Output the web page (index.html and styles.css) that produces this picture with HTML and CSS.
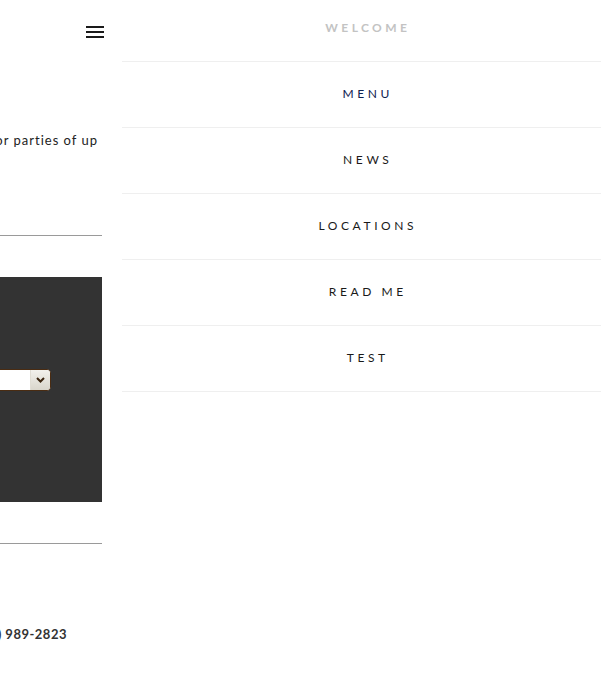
FILE: index.html
```html
<!DOCTYPE html>
<html lang="en">
<head>
<meta charset="utf-8">
<title>Menu</title>
<link rel="stylesheet" href="styles.css">
</head>
<body>
<div class="shell">
  <div class="page-clip">
    <div class="page">
      <header class="page-header">
        <button class="burger" aria-label="Menu">
          <span></span><span></span><span></span>
        </button>
      </header>
      <p class="intro">Reservations are accepted for parties of up</p>
      <hr class="rule rule-top">
      <section class="dark-box">
        <div class="select">
          <span class="select-field">Select a location</span>
          <span class="select-btn">
            <svg width="9" height="6" viewBox="0 0 9 6"><path d="M1 1 L4.5 4.5 L8 1" fill="none" stroke="#3a2510" stroke-width="2"/></svg>
          </span>
        </div>
      </section>
      <hr class="rule rule-bottom">
      <p class="phone">Call us (555) 989-2823</p>
    </div>
  </div>
  <nav class="side-nav">
    <ul class="nav-list">
      <li class="nav-item welcome">WELCOME</li>
      <li class="nav-item active">MENU</li>
      <li class="nav-item">NEWS</li>
      <li class="nav-item">LOCATIONS</li>
      <li class="nav-item">READ ME</li>
      <li class="nav-item">TEST</li>
    </ul>
  </nav>
</div>
</body>
</html>
```

FILE: styles.css
```css
html, body {
  margin: 0;
  padding: 0;
  background: #fff;
}
body {
  font-family: Lato, "Noto Sans", "Liberation Sans", sans-serif;
  color: #222;
}
.shell {
  display: flex;
  width: 601px;
  height: 685px;
  overflow: hidden;
}
.page-clip {
  width: 122px;
  flex: 0 0 122px;
  display: flex;
  justify-content: flex-end;
  overflow: hidden;
  padding-right: 20px;
  box-sizing: border-box;
}
.page {
  flex: 0 0 420px;
  width: 420px;
  display: flex;
  flex-direction: column;
}
.page-header {
  height: 61px;
  display: flex;
  justify-content: flex-end;
  align-items: flex-start;
}
.burger {
  margin: 26px -2px 0 0;
  padding: 0;
  border: 0;
  background: none;
  width: 18px;
  display: flex;
  flex-direction: column;
  gap: 3px;
}
.burger span {
  display: block;
  width: 18px;
  height: 2px;
  background: #1a1a1a;
}
.intro {
  margin: 71px 0 0;
  font-size: 13px;
  line-height: 16px;
  letter-spacing: 1px;
  white-space: nowrap;
  text-align: right;
  padding-right: 4px;
  color: #222;
}
.rule {
  border: 0;
  height: 1px;
  background: #9a9a9a;
  margin: 0;
}
.rule-top {
  margin-top: 87px;
}
.dark-box {
  margin-top: 41px;
  height: 225px;
  background: #333;
  display: flex;
  justify-content: flex-end;
  align-items: flex-start;
}
.select {
  margin-top: 92px;
  margin-right: 51px;
  width: 220px;
  height: 22px;
  box-sizing: border-box;
  border: 1px solid #4a2c12;
  border-radius: 4px;
  background: #fff;
  display: flex;
  overflow: hidden;
}
.select-field {
  flex: 1;
  font-size: 12px;
  line-height: 20px;
  padding-left: 6px;
  color: #333;
}
.select-btn {
  width: 19px;
  background: linear-gradient(#f2f1ec, #d9d6cc);
  border-left: 1px solid #e0ddd4;
  display: flex;
  align-items: center;
  justify-content: center;
}
.rule-bottom {
  margin-top: 41px;
}
.phone {
  margin: 82px 0 0;
  font-size: 13px;
  font-weight: 700;
  line-height: 16px;
  letter-spacing: 0.5px;
  white-space: nowrap;
  text-align: right;
  padding-right: 35px;
  color: #333;
}
.side-nav {
  flex: 1;
  overflow: hidden;
}
.nav-list {
  list-style: none;
  margin: 0;
  padding: 0;
  width: 488px;
}
.nav-item {
  height: 63px;
  padding-bottom: 2px;
  border-bottom: 1px solid #efefef;
  display: flex;
  align-items: center;
  justify-content: center;
  font-size: 12px;
  letter-spacing: 3.6px;
  padding-left: 3.6px;
  color: #1a1a1a;
  box-sizing: content-box;
}
.nav-item.welcome {
  height: 55px;
  padding-bottom: 6px;
  color: #c3c3c3;
  font-weight: 700;
  letter-spacing: 3.4px;
}
.nav-item.active {
  color: #0e2150;
}
```
